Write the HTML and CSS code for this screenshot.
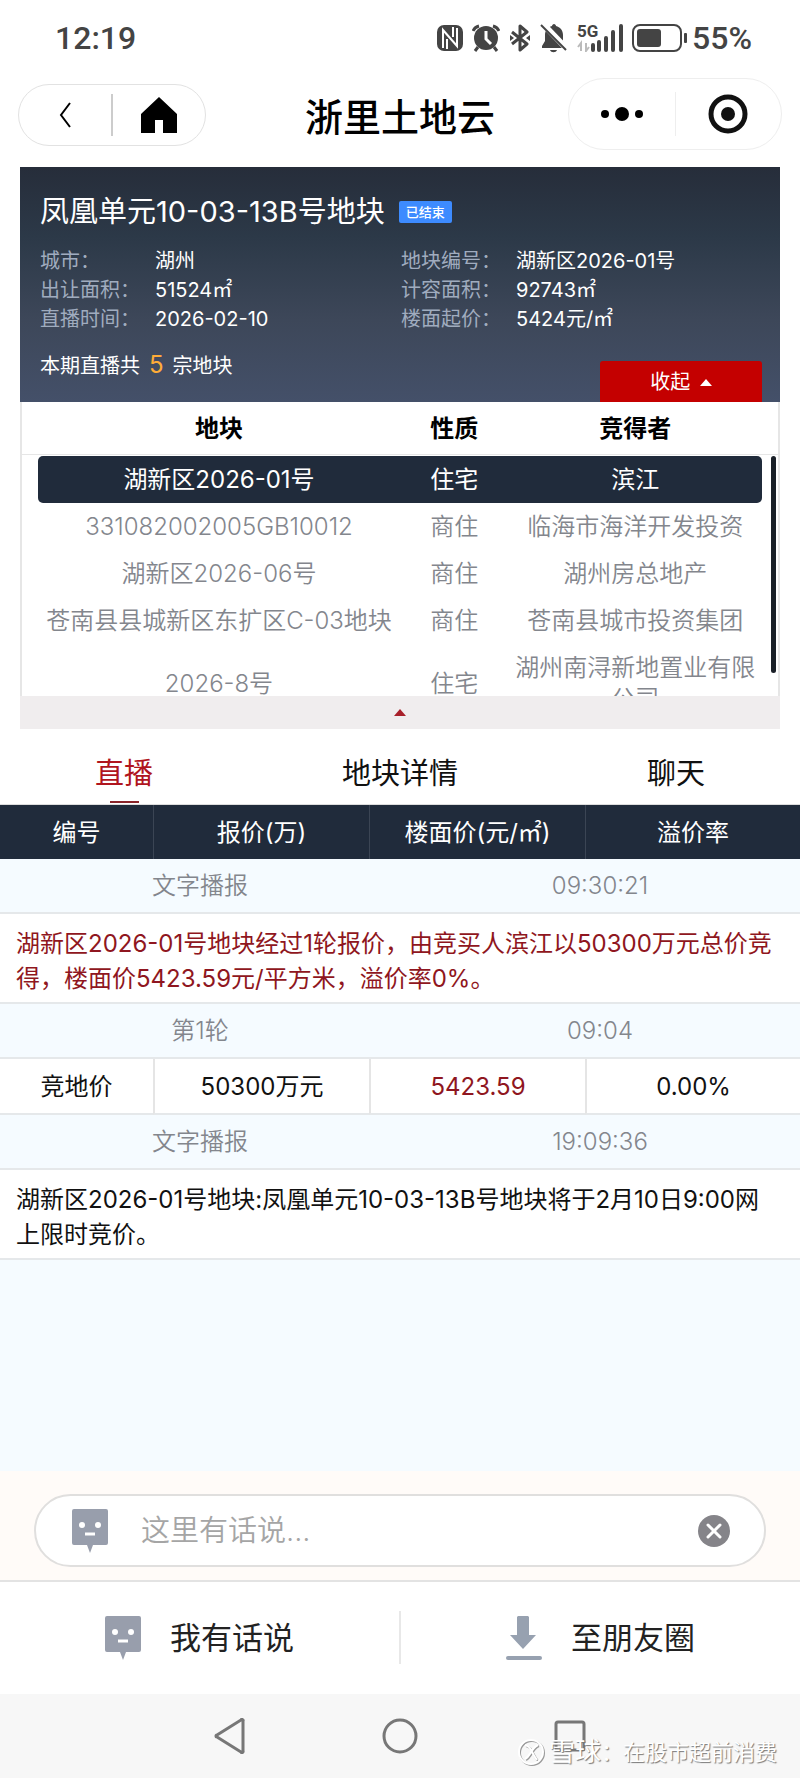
FILE: index.html
```html
<!DOCTYPE html>
<html lang="zh-CN">
<head>
    <meta charset="UTF-8">
    <meta name="viewport" content="width=device-width, initial-scale=1.0">
    <title>浙里土地云</title>
    <link rel="stylesheet" href="styles.css">
</head>
<body>
    <div class="page">
        <!-- 系统状态栏 -->
        <div class="status-bar">
            <span>12:19</span>
            <div class="status-icons">
                <svg width="26" height="26" viewBox="0 0 26 26">
                    <rect x="0" y="0" width="26" height="26" rx="7" fill="#444"/>
                    <path d="M6 23V5l14 16V3" fill="none" stroke="#fff" stroke-width="2"/>
                    <path d="M10 24V14M16 12V2" fill="none" stroke="#fff" stroke-width="2"/>
                </svg>
                <svg width="28" height="28" viewBox="0 0 28 28">
                    <circle cx="14" cy="14" r="12" fill="#444"/>
                    <path d="M1 7a9 9 0 0 1 6-5M27 7a9 9 0 0 0-6-5M6 23l-3 4M22 23l3 4" fill="none" stroke="#444" stroke-width="3"/>
                    <path d="M14 7v8l5 5" fill="none" stroke="#fff" stroke-width="3"/>
                </svg>
                <svg width="22" height="28" viewBox="0 0 22 28">
                    <path d="M3 8l15 12-7 6V2l7 6L3 20" fill="none" stroke="#444" stroke-width="3" stroke-linejoin="round"/>
                    <path d="M1 11l4 3-4 3zM21 11l-4 3 4 3z" fill="#444"/>
                </svg>
                <svg width="28" height="30" viewBox="0 0 28 30">
                    <path d="M14 1c1 0 2 1 2 2 4 1 7 4 7 9v6l3 6v1H2v-2l3-5v-6c0-5 3-8 7-9 0-1 1-2 2-2zM10 27h7c-1 3-6 3-7 0z" fill="#444"/>
                    <path d="M3 1l23 24" stroke="#fff" stroke-width="6"/>
                    <path d="M1 2l25 25" stroke="#444" stroke-width="2"/>
                </svg>
                <div class="signal">
                    <span>5G</span>
                    <svg width="46" height="28" viewBox="0 0 46 28">
                        <path d="M4 27v-8l-3 4M9 19v8l3-4" fill="none" stroke="#bbb" stroke-width="2"/>
                        <path d="M16 26v-5M22 26v-8M29 26V14M36 26V8M44 26V2" fill="none" stroke="#444" stroke-width="4" stroke-linecap="round"/>
                    </svg>
                </div>
                <svg width="56" height="28" viewBox="0 0 56 28">
                    <rect x="1" y="1" width="48" height="26" rx="7" fill="none" stroke="#444" stroke-width="2"/>
                    <rect x="5" y="5" width="24" height="18" rx="3" fill="#444"/>
                    <rect x="52" y="9" width="3" height="10" rx="1" fill="#444"/>
                </svg>
                <span class="battery">55%</span>
            </div>
        </div>

        <!-- 标题栏 -->
        <header class="top-bar">
            <div class="capsule capsule-left">
                <button type="button" aria-label="返回">
                    <svg width="14" height="28" viewBox="0 0 14 28"><path d="M12 2L3 14l9 12" fill="none" stroke="#000" stroke-width="2"/></svg>
                </button>
                <button type="button" aria-label="首页">
                    <svg width="36" height="36" viewBox="0 0 36 36"><path d="M18 0l18 17v19H22V23h-8v13H0V17z"/></svg>
                </button>
            </div>
            <h1>浙里土地云</h1>
            <div class="capsule capsule-right">
                <button type="button" aria-label="更多">
                    <svg width="42" height="14" viewBox="0 0 42 14"><circle cx="4" cy="7" r="4"/><circle cx="21" cy="7" r="7"/><circle cx="38" cy="7" r="4"/></svg>
                </button>
                <button type="button" aria-label="关闭">
                    <svg width="40" height="40" viewBox="0 0 40 40"><circle cx="20" cy="20" r="17" fill="none" stroke="#111" stroke-width="5"/><circle cx="20" cy="20" r="7" fill="#111"/></svg>
                </button>
            </div>
        </header>

        <!-- 地块信息 -->
        <section class="card">
            <div class="card-head">
                <div class="card-title">
                    <h2>凤凰单元10-03-13B号地块</h2>
                    <span class="badge">已结束</span>
                </div>
                <dl class="info">
                    <dt>城市：</dt><dd>湖州</dd>
                    <dt>地块编号：</dt><dd>湖新区2026-01号</dd>
                    <dt>出让面积：</dt><dd>51524㎡</dd>
                    <dt>计容面积：</dt><dd>92743㎡</dd>
                    <dt>直播时间：</dt><dd>2026-02-10</dd>
                    <dt>楼面起价：</dt><dd>5424元/㎡</dd>
                </dl>
                <div class="card-foot">
                    <p>本期直播共<b>5</b>宗地块</p>
                    <button type="button" class="fold-btn">收起 <i class="arrow-up"></i></button>
                </div>
            </div>
            <div class="lots">
                <div class="lots-head">
                    <table class="lots-table">
                        <thead>
                            <tr><th class="col-lot">地块</th><th class="col-type">性质</th><th>竞得者</th></tr>
                        </thead>
                    </table>
                </div>
                <div class="lots-body">
                    <table class="lots-table">
                        <tbody>
                            <tr class="active"><td class="col-lot">湖新区2026-01号</td><td class="col-type">住宅</td><td>滨江</td></tr>
                            <tr><td>331082002005GB10012</td><td>商住</td><td>临海市海洋开发投资</td></tr>
                            <tr><td>湖新区2026-06号</td><td>商住</td><td>湖州房总地产</td></tr>
                            <tr><td>苍南县县城新区东扩区C-03地块</td><td>商住</td><td>苍南县城市投资集团</td></tr>
                            <tr><td>2026-8号</td><td>住宅</td><td>湖州南浔新地置业有限公司</td></tr>
                        </tbody>
                    </table>
                    <div class="scroll-thumb"></div>
                </div>
            </div>
            <button type="button" class="lots-fold" aria-label="收起列表"><i class="arrow-up red"></i></button>
        </section>

        <!-- 选项卡 -->
        <nav class="tabs">
            <a href="#live" class="active">直播</a>
            <a href="#detail">地块详情</a>
            <a href="#chat">聊天</a>
        </nav>

        <!-- 报价记录 -->
        <main class="live" id="live">
            <table class="bids">
                <thead>
                    <tr><th class="col-no">编号</th><th class="col-bid">报价(万)</th><th class="col-bid">楼面价(元/㎡)</th><th>溢价率</th></tr>
                </thead>
                <tbody>
                    <tr class="band"><td colspan="4"><div><span>文字播报</span><span>09:30:21</span></div></td></tr>
                    <tr class="message red-text"><td colspan="4">湖新区2026-01号地块经过1轮报价，由竞买人滨江以50300万元总价竞得，楼面价5423.59元/平方米，溢价率0%。</td></tr>
                    <tr class="band"><td colspan="4"><div><span>第1轮</span><span>09:04</span></div></td></tr>
                    <tr class="bid"><td>竞地价</td><td>50300万元</td><td class="red-text">5423.59</td><td>0.00%</td></tr>
                    <tr class="band"><td colspan="4"><div><span>文字播报</span><span>19:09:36</span></div></td></tr>
                    <tr class="message"><td colspan="4">湖新区2026-01号地块:凤凰单元10-03-13B号地块将于2月10日9:00网上限时竞价。</td></tr>
                </tbody>
            </table>
        </main>

        <!-- 输入框 -->
        <form class="chat-form">
            <div class="chat-box">
                <svg class="face" width="36" height="44" viewBox="0 0 36 44">
                    <path d="M2 0h32a2 2 0 0 1 2 2v32a2 2 0 0 1-2 2H21l-3 8-3-8H2a2 2 0 0 1-2-2V2a2 2 0 0 1 2-2z" fill="#989eac"/>
                    <circle cx="10" cy="16" r="3" fill="#fff"/><circle cx="26" cy="16" r="3" fill="#fff"/><path d="M13 25h10" stroke="#fff" stroke-width="3"/>
                </svg>
                <input type="text" aria-label="发言内容" placeholder="这里有话说...">
                <button type="reset" aria-label="清空">
                    <svg width="32" height="32" viewBox="0 0 32 32"><circle cx="16" cy="16" r="16" fill="#858489"/><path d="M10 10l12 12M22 10L10 22" stroke="#fff" stroke-width="3" stroke-linecap="round"/></svg>
                </button>
            </div>
        </form>

        <div class="actions">
            <button type="button">
                <svg class="face" width="36" height="44" viewBox="0 0 36 44">
                    <path d="M2 0h32a2 2 0 0 1 2 2v32a2 2 0 0 1-2 2H21l-3 8-3-8H2a2 2 0 0 1-2-2V2a2 2 0 0 1 2-2z" fill="#989eac"/>
                    <circle cx="10" cy="16" r="3" fill="#fff"/><circle cx="26" cy="16" r="3" fill="#fff"/><path d="M13 25h10" stroke="#fff" stroke-width="3"/>
                </svg>
                我有话说
            </button>
            <button type="button">
                <svg width="36" height="44" viewBox="0 0 36 44">
                    <path d="M12 0h10l1 1v18h7L17 33 4 19h7V1z" fill="#97a1b0"/>
                    <rect x="0" y="40" width="36" height="4" rx="2" fill="#97a1b0"/>
                </svg>
                至朋友圈
            </button>
        </div>

        <!-- 系统导航栏 -->
        <div class="system-nav">
            <button type="button" aria-label="后退">
                <svg width="34" height="36" viewBox="0 0 34 36"><path d="M30 3v30a1 1 0 0 1-2 1L4 19a1 1 0 0 1 0-2L28 2a1 1 0 0 1 2 1z" fill="none" stroke="#777" stroke-width="3"/></svg>
            </button>
            <button type="button" aria-label="主屏幕">
                <svg width="36" height="36" viewBox="0 0 36 36"><circle cx="18" cy="18" r="16" fill="none" stroke="#777" stroke-width="3"/></svg>
            </button>
            <button type="button" aria-label="最近任务">
                <svg width="34" height="34" viewBox="0 0 34 34"><rect x="3" y="3" width="28" height="28" rx="2" fill="none" stroke="#777" stroke-width="3"/></svg>
            </button>
        </div>

        <div class="watermark">
            <svg width="28" height="28" viewBox="0 0 28 28">
                <g fill="none" stroke="#999" stroke-width="2"><circle cx="15" cy="15" r="12"/><path d="M9 8c7 2 5 6 12 15M22 8c-7 3-7 11-13 14"/></g>
                <g fill="none" stroke="#fff" stroke-width="2"><circle cx="14" cy="14" r="12"/><path d="M8 7c7 2 5 6 12 15M21 7c-7 3-7 11-13 14"/></g>
            </svg>
            <span class="brand">雪球</span><span>：在股市超前消费</span>
        </div>
    </div>
</body>
</html>
```
FILE: styles.css
```css
* {
    box-sizing: border-box;
}
body {
    margin: 0;
    background: #fff;
    color: #111;
    font-family: Inter, "Noto Sans CJK SC", sans-serif;
    font-size: 24px;
}
h1, h2, p, dl, dd {
    margin: 0;
}
button {
    padding: 0;
    border: none;
    background: none;
    color: inherit;
    font: inherit;
    cursor: pointer;
}
svg {
    display: block;
}
a {
    color: inherit;
    text-decoration: none;
}
table {
    width: 100%;
    border-collapse: separate;
    border-spacing: 0;
    table-layout: fixed;
}
th, td {
    padding: 0;
    text-align: center;
}
.page {
    position: relative;
    display: flex;
    flex-direction: column;
    min-height: 100vh;
}

/* 状态栏 */
.status-bar {
    display: flex;
    align-items: center;
    justify-content: space-between;
    height: 76px;
    padding: 0 48px 0 55px;
    color: #444;
    font-family: Roboto, sans-serif;
    font-size: 32px;
    font-weight: 500;
}
.status-icons {
    display: flex;
    align-items: center;
    gap: 9px;
}
.signal {
    position: relative;
}
.signal span {
    position: absolute;
    top: -2px;
    left: 0;
    font-size: 17px;
    line-height: 18px;
    font-weight: 700;
}
.battery {
    margin-left: -5px;
}

/* 标题栏 */
.top-bar {
    display: flex;
    align-items: center;
    justify-content: space-between;
    height: 76px;
    padding: 0 18px;
}
.top-bar h1 {
    flex: 1;
    padding-top: 6px;
    text-align: center;
    font-size: 38px;
    font-weight: 500;
    line-height: 48px;
    color: #000;
}
.capsule {
    display: flex;
    align-items: center;
    border: 1px solid #e2e2e2;
    border-radius: 36px;
}
.capsule button {
    flex: 1;
    display: flex;
    align-items: center;
    justify-content: center;
}
.capsule button + button {
    border-left: 2px solid #ccc;
}
.capsule-left {
    width: 188px;
    height: 62px;
    margin: 2px 26px 0 0;
}
.capsule-left button {
    height: 42px;
}
.capsule-right {
    width: 214px;
    height: 72px;
    border-color: #eee;
}
.capsule-right button {
    height: 44px;
}
.capsule-right button + button {
    border-left: 1px solid #eee;
}

/* 地块卡片 */
.card {
    margin: 15px 20px 0;
}
.card-head {
    padding: 25px 18px 0 20px;
    background: linear-gradient(#262d3a, #2c3948 30%, #3d4759 65%, #445069);
    color: #fff;
}
.card-title {
    display: flex;
    align-items: center;
    gap: 14px;
}
.card-title h2 {
    font-size: 29px;
    font-weight: 400;
    line-height: 40px;
}
.badge {
    padding: 0 7px;
    border-radius: 2px;
    background: #3d8bff;
    font-size: 13px;
    font-weight: 500;
    line-height: 22px;
}
.info {
    display: grid;
    grid-template-columns: 115px 1fr 115px 1fr;
    margin-top: 15px;
    font-size: 20px;
    line-height: 29px;
}
.info dt {
    color: #a0acbf;
}
.card-foot {
    display: flex;
    justify-content: space-between;
    margin-top: 19px;
    height: 49px;
    font-size: 20px;
    line-height: 24px;
}
.card-foot b {
    margin: 0 9px;
    color: #ffac38;
    font-size: 24px;
    font-weight: 400;
}
.fold-btn {
    align-self: flex-end;
    width: 162px;
    height: 41px;
    border-radius: 3px 3px 0 0;
    background: #c40000;
}
.arrow-up {
    display: inline-block;
    margin: 0 0 3px 4px;
    border: 6px solid transparent;
    border-top: none;
    border-bottom: 7px solid #fff;
}
.arrow-up.red {
    margin: 0;
    border-bottom-color: #a8202a;
}
.lots {
    border: 1px solid #e6e6e6;
    border-width: 0 2px;
}
.lots-head {
    padding: 0 16px;
    border-bottom: 1px solid #e6e6e6;
}
.lots-head th {
    height: 52px;
    color: #000;
    font-weight: 700;
    line-height: 31px;
}
.lots-body {
    position: relative;
    height: 241px;
    padding: 1px 16px 0;
    overflow: hidden;
}
.lots-table .col-lot {
    width: 50%;
}
.lots-table .col-type {
    width: 15%;
}
.lots-table td {
    height: 47px;
    color: #83868d;
    font-weight: 350;
    line-height: 31px;
}
.lots-table .active td {
    background: #202b3b;
    color: #fff;
    font-weight: 400;
}
.lots-table .active td:first-child {
    border-radius: 5px 0 0 5px;
}
.lots-table .active td:last-child {
    border-radius: 0 5px 5px 0;
}
.lots-body tr:last-child td {
    padding: 8px 4px 0;
}
.scroll-thumb {
    position: absolute;
    top: 1px;
    right: 2px;
    width: 5px;
    height: 217px;
    border-radius: 3px;
    background: #1a2028;
}
.lots-fold {
    display: flex;
    align-items: center;
    justify-content: center;
    width: 100%;
    height: 33px;
    background: #f0edee;
}

/* 选项卡 */
.tabs {
    display: flex;
    justify-content: space-between;
    padding: 17px 95px 0;
    border-bottom: 1px solid #ddd;
    font-size: 29px;
}
.tabs a {
    height: 58px;
    line-height: 55px;
}
.tabs .active {
    color: #b0151e;
}
.tabs .active::after {
    content: "";
    display: block;
    width: 29px;
    height: 2px;
    margin: 0 auto;
    background: #8a2429;
}

/* 直播记录 */
.live {
    flex: 1;
    background: #f5fbff;
}
.bids th {
    height: 54px;
    background: #202b3b;
    color: #fff;
    font-weight: 400;
    line-height: 35px;
}
.bids .col-no {
    width: 153px;
}
.bids .col-bid {
    width: 27%;
}
.bids th + th {
    border-left: 1px solid #3b4554;
}
.bids td {
    border-bottom: 2px solid #e5e8ea;
}
.band div {
    display: grid;
    grid-template-columns: 1fr 1fr;
    color: #83868d;
    font-weight: 350;
    line-height: 53px;
}
.message td {
    padding: 12px 20px 6px 16px;
    background: #fff;
    text-align: left;
    line-height: 35px;
}
.bid td {
    height: 56px;
    background: #fff;
    line-height: 35px;
}
.bid td + td {
    border-left: 2px solid #e5e5e5;
}
.red-text {
    color: #8f1620;
}

/* 输入区 */
.chat-form {
    padding: 23px 34px 13px;
    border-bottom: 2px solid #e3e3e3;
    background: #fffbf8;
}
.chat-box {
    display: flex;
    align-items: center;
    height: 73px;
    padding: 0 34px 0 36px;
    border: 2px solid #e0dfde;
    border-radius: 37px;
    background: #fff;
}
.chat-box input {
    flex: 1;
    min-width: 0;
    margin-left: 33px;
    padding: 0;
    border: none;
    outline: none;
    background: none;
    font: inherit;
    font-size: 29px;
}
.chat-box input::placeholder {
    color: #a5a5a5;
    font-weight: 350;
}
.actions {
    display: flex;
    padding: 29px 0 30px;
}
.actions button {
    flex: 1;
    display: flex;
    align-items: center;
    justify-content: center;
    gap: 29px;
    height: 53px;
    font-size: 31px;
    line-height: 44px;
    color: #222;
}
.actions button + button {
    border-left: 2px solid #e8e8e8;
}

/* 系统导航 */
.system-nav {
    display: flex;
    align-items: center;
    justify-content: center;
    gap: 135px;
    height: 84px;
    background: #f7f7f7;
}

/* 水印 */
.watermark {
    position: absolute;
    right: 23px;
    bottom: 10px;
    display: flex;
    align-items: center;
    color: #fff;
    font-size: 22px;
    line-height: 32px;
    text-shadow: 1px 1px 1px #777;
}
.watermark .brand {
    margin-left: 4px;
    font-size: 26px;
}
```
